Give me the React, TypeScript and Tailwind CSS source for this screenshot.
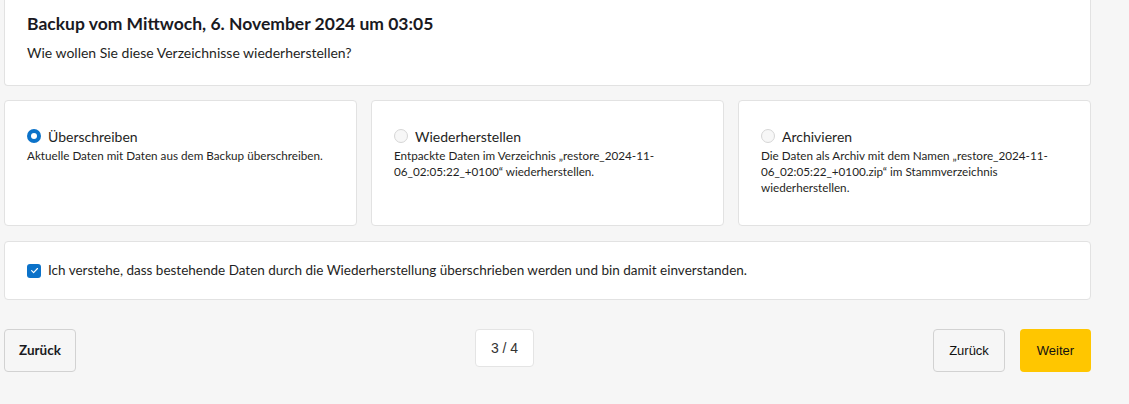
const font = { fontFamily: "Lato, 'Noto Sans', sans-serif" };

function Radio({ checked }: { checked: boolean }) {
  return checked ? (
    <span className="w-[14px] h-[14px] rounded-full bg-[#0b72c9] flex items-center justify-center shrink-0">
      <span className="w-[6px] h-[6px] rounded-full bg-white" />
    </span>
  ) : (
    <span className="w-[14px] h-[14px] rounded-full border border-[#d6d6d6] bg-[#f7f7f7] shrink-0" />
  );
}

function Option({ title, text, checked }: { title: string; text: string; checked: boolean }) {
  return (
    <div className="bg-white border border-[#e2e2e2] rounded-[4px] pt-[25px] px-[22px] pb-[20px]">
      <div className="flex items-center gap-[7px] h-[20px]">
        <Radio checked={checked} />
        <span className="text-[14px] text-[#1f1f24]">{title}</span>
      </div>
      <p className="mt-[1px] text-[11.7px] leading-[16px] text-[#1f1f24]">{text}</p>
    </div>
  );
}

export default function App() {
  return (
    <div className="min-h-[404px] bg-[#f6f6f6] pl-[4px]" style={font}>
      <div className="w-[1087px]">
        <div className="bg-white border border-t-0 border-[#e2e2e2] rounded-b-[4px] px-[22px] pt-[12px] pb-[23px]">
          <h1 className="text-[17.5px] leading-[24px] font-bold text-[#1a1a1f]">
            Backup vom Mittwoch, 6. November 2024 um 03:05
          </h1>
          <p className="mt-[8px] text-[14px] leading-[18px] text-[#1f1f24]">
            Wie wollen Sie diese Verzeichnisse wiederherstellen?
          </p>
        </div>

        <div className="grid grid-cols-3 gap-[14px] mt-[14px] h-[126px]">
          <Option checked title="Überschreiben" text="Aktuelle Daten mit Daten aus dem Backup überschreiben." />
          <Option
            checked={false}
            title="Wiederherstellen"
            text="Entpackte Daten im Verzeichnis „restore_2024-11-06_02:05:22_+0100“ wiederherstellen."
          />
          <Option
            checked={false}
            title="Archivieren"
            text="Die Daten als Archiv mit dem Namen „restore_2024-11-06_02:05:22_+0100.zip“ im Stammverzeichnis wiederherstellen."
          />
        </div>

        <div className="mt-[15px] bg-white border border-[#e2e2e2] rounded-[4px] h-[59px] px-[22px] flex items-center gap-[7px]">
          <span className="w-[14px] h-[14px] rounded-[3px] bg-[#0b72c9] flex items-center justify-center shrink-0">
            <svg width="9" height="9" viewBox="0 0 10 10" fill="none">
              <path d="M1.8 5.2 4 7.3 8.3 2.8" stroke="white" strokeWidth="1.3" strokeLinecap="round" strokeLinejoin="round" />
            </svg>
          </span>
          <span className="text-[13.5px] text-[#1f1f24]">
            Ich verstehe, dass bestehende Daten durch die Wiederherstellung überschrieben werden und bin damit einverstanden.
          </span>
        </div>

        <div className="mt-[29px] flex items-start">
          <button className="h-[43px] w-[72px] border border-[#d2d2d2] rounded-[4px] bg-[#f6f6f6] text-[13.5px] font-bold text-[#1a1a1f]">
            Zurück
          </button>
          <div className="flex-1 flex justify-center">
            <div
              className="h-[38px] w-[59px] bg-white border border-[#e4e4e4] rounded-[4px] flex items-center justify-center text-[14px] text-[#333]"
              style={{ fontFamily: "'Liberation Sans', Arial, sans-serif" }}
            >
              3 / 4
            </div>
          </div>
          <div className="flex gap-[15px]" style={{ fontFamily: "'Liberation Sans', Arial, sans-serif" }}>
            <button className="h-[43px] w-[72px] border border-[#d2d2d2] rounded-[4px] bg-[#f6f6f6] text-[13px] text-[#111]">
              Zurück
            </button>
            <button className="h-[43px] w-[71px] rounded-[4px] bg-[#ffc600] text-[13px] text-[#111]">
              Weiter
            </button>
          </div>
        </div>
      </div>
    </div>
  );
}
